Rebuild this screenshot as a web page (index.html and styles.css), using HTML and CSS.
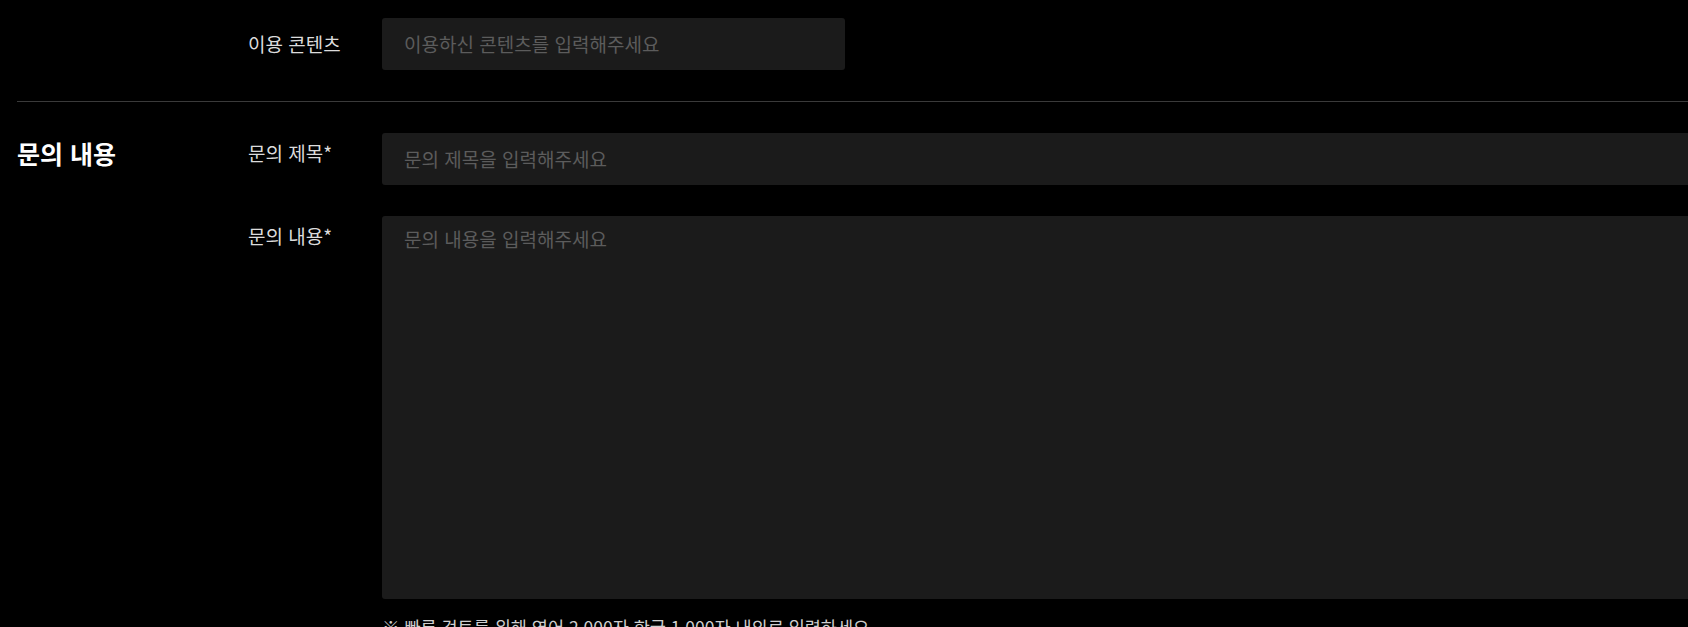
FILE: index.html
```html
<!DOCTYPE html>
<html lang="ko">
<head>
  <meta charset="UTF-8">
  <meta name="viewport" content="width=device-width, initial-scale=1.0">
  <title>문의하기</title>
  <link rel="stylesheet" href="styles.css">
</head>
<body>
  <div class="page">
    <div class="row row-top">
      <div class="spacer"></div>
      <label class="label" for="content">이용 콘텐츠</label>
      <input class="field field-short" id="content" type="text" placeholder="이용하신 콘텐츠를 입력해주세요">
    </div>

    <hr class="divider">

    <section class="section">
      <h2 class="section-title">문의 내용</h2>
      <div class="fields">
        <div class="row">
          <label class="label" for="title">문의 제목*</label>
          <input class="field" id="title" type="text" placeholder="문의 제목을 입력해주세요">
        </div>
        <div class="row">
          <label class="label label-area" for="body">문의 내용*</label>
          <div class="area-wrap">
            <textarea class="field area" id="body" placeholder="문의 내용을 입력해주세요"></textarea>
            <p class="note">※ 빠른 검토를 위해 영어 2,000자 한글 1,000자 내외로 입력하세요</p>
          </div>
        </div>
      </div>
    </section>
  </div>
</body>
</html>
```

FILE: styles.css
```css
html, body {
  margin: 0;
  padding: 0;
  overflow: hidden;
}
body {
  background-color: #000;
  color: #ddd;
  font-family: "Noto Sans CJK KR", "Noto Sans", sans-serif;
}
.page {
  width: 1900px;
  padding: 18px 0 0 17px;
}
.row {
  display: flex;
  align-items: flex-start;
}
.row-top {
  align-items: center;
}
.spacer {
  width: 231px;
  flex-shrink: 0;
}
.label {
  width: 134px;
  flex-shrink: 0;
  font-size: 19px;
  line-height: 26px;
  color: #dcdcdc;
  padding-top: 7px;
}
.row-top .label {
  padding-top: 0;
}
.field {
  box-sizing: border-box;
  height: 52px;
  flex: 1;
  padding: 0 22px 2px;
  background-color: #1b1b1b;
  border: none;
  border-radius: 3px;
  color: #ddd;
  font-family: inherit;
  font-size: 19px;
  outline: none;
}
.field::placeholder {
  color: #5c5c5c;
}
.field-short {
  flex: none;
  width: 463px;
}
.divider {
  border: none;
  border-top: 1px solid #3a3a3a;
  margin: 31px 0 0 0;
}
.section {
  display: flex;
  margin-top: 31px;
}
.section-title {
  width: 231px;
  flex-shrink: 0;
  margin: 0;
  padding-top: 2px;
  font-size: 25px;
  font-weight: 700;
  color: #fff;
}
.fields {
  flex: 1;
  display: flex;
  flex-direction: column;
  gap: 31px;
}
.area-wrap {
  flex: 1;
  display: flex;
  flex-direction: column;
}
.area {
  flex: none;
  height: 383px;
  padding: 10px 22px;
  line-height: 26px;
  resize: none;
}
.note {
  margin: 15px 0 0 0;
  font-size: 17.5px;
  color: #cfcfcf;
}
```
